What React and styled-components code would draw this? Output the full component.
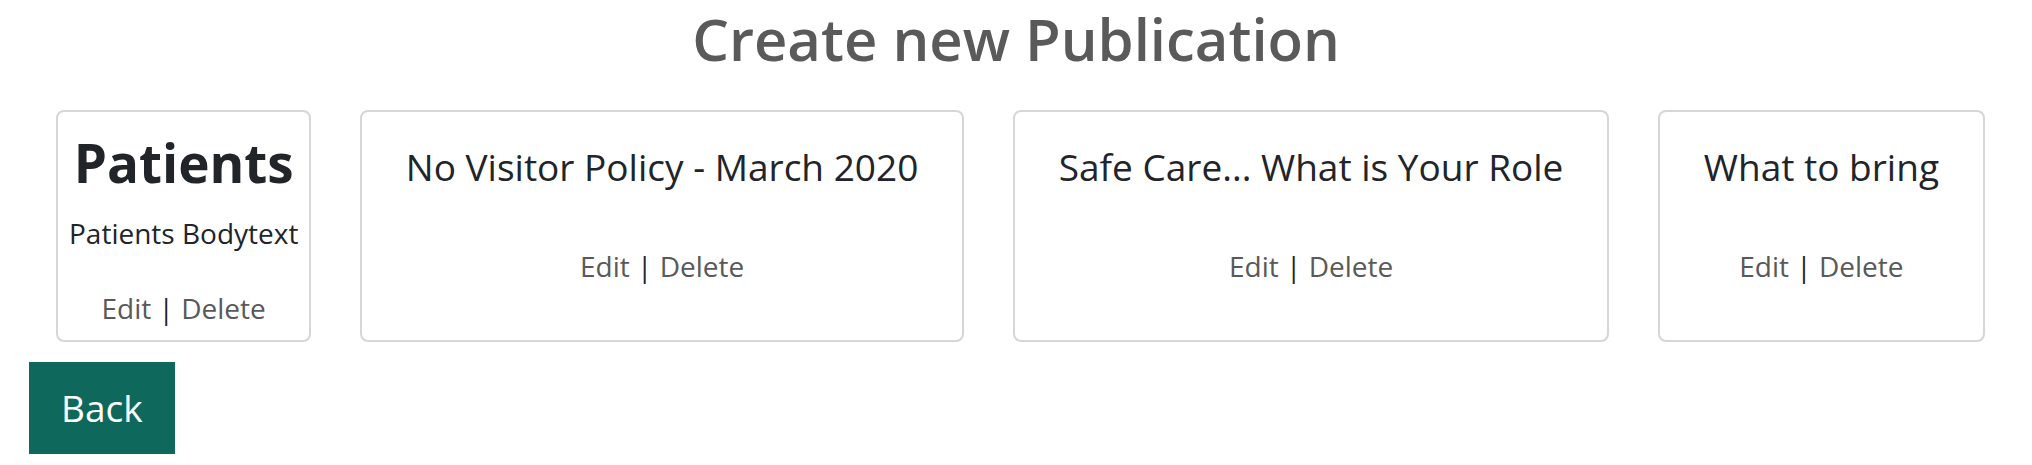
import React from "react";
import styled, { createGlobalStyle } from "styled-components";

const Global = createGlobalStyle`
  html, body { margin: 0; padding: 0; background: #ffffff; }
  body { font-family: "Open Sans", "Noto Sans", "Liberation Sans", sans-serif; color: #212529; }
`;

const Page = styled.div`
  display: flex;
  flex-direction: column;
  width: 2032px;
`;

const PageTitle = styled.h1`
  margin: 2px 0 34px;
  text-align: center;
  font-size: 58px;
  line-height: 74px;
  font-weight: 600;
  color: #5a5a5a;
`;

const CardRow = styled.div`
  display: flex;
  justify-content: space-between;
  align-items: stretch;
  padding: 0 47px 0 56px;
`;

const Card = styled.div`
  display: flex;
  flex-direction: column;
  align-items: center;
  box-sizing: border-box;
  height: 232px;
  padding: 9px ${(p) => (p.$compact ? "11px" : "44px")} 12px;
  border: 2px solid #d6d6d6;
  border-radius: 8px;
  text-align: center;
  white-space: nowrap;
`;

const CardHeading = styled.h2`
  margin: 2px 0 0;
  font-size: 53px;
  line-height: 80px;
  font-weight: 700;
  color: #212529;
`;

const CardTitle = styled.h3`
  margin: 23px 0 0;
  font-size: 37px;
  line-height: 46px;
  font-weight: 400;
  color: #212529;
`;

const CardBody = styled.p`
  margin: 9px 0 0;
  font-size: 28px;
  line-height: 42px;
  color: #212529;
`;

const Links = styled.div`
  margin-top: ${(p) => (p.$gap ? p.$gap : 33)}px;
  font-size: 28px;
  line-height: 42px;
  color: #212529;
`;

const LinkText = styled.a`
  color: #595959;
  text-decoration: none;
  cursor: pointer;
`;

const Footer = styled.div`
  padding: 20px 0 0 29px;
`;

const BackButton = styled.button`
  display: inline-flex;
  align-items: center;
  justify-content: center;
  height: 92px;
  padding: 0 32px;
  border: none;
  border-radius: 0;
  background: #0e695c;
  color: #ffffff;
  font-family: "Open Sans", "Noto Sans", sans-serif;
  font-size: 37px;
  line-height: 58px;
  cursor: pointer;
`;

const EditLinks = ({ gap }) => (
  <Links $gap={gap}>
    <LinkText>Edit</LinkText> | <LinkText>Delete</LinkText>
  </Links>
);

const publications = [
  "No Visitor Policy - March 2020",
  "Safe Care... What is Your Role",
  "What to bring",
];

export default function App() {
  return (
    <Page>
      <Global />
      <PageTitle>Create new Publication</PageTitle>
      <CardRow>
        <Card $compact>
          <CardHeading>Patients</CardHeading>
          <CardBody>Patients Bodytext</CardBody>
          <EditLinks gap={33} />
        </Card>
        {publications.map((t) => (
          <Card key={t}>
            <CardTitle>{t}</CardTitle>
            <EditLinks gap={55} />
          </Card>
        ))}
      </CardRow>
      <Footer>
        <BackButton>Back</BackButton>
      </Footer>
    </Page>
  );
}
